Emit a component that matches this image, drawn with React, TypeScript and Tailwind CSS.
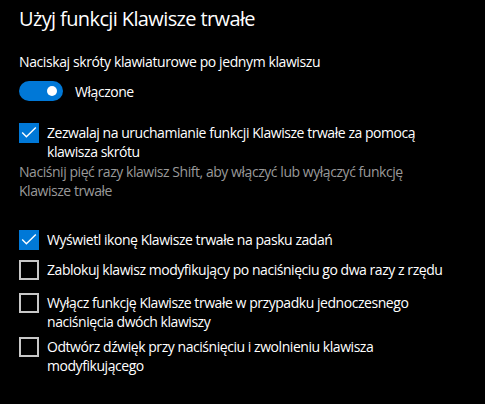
import React from "react";

function Check() {
  return (
    <div className="w-[20px] h-[20px] shrink-0 bg-[#0078d7] flex items-center justify-center">
      <svg width="20" height="20" viewBox="0 0 20 20" fill="none">
        <polyline points="3.2,9.6 7.4,13.8 16.8,4.6" stroke="#ffffff" strokeWidth="1.4" fill="none" />
      </svg>
    </div>
  );
}

function Empty() {
  return <div className="w-[20px] h-[20px] shrink-0 border-2 border-[#c8c8c8] box-border" />;
}

function Item({ checked, lines, className }: { checked: boolean; lines: string[]; className: string }) {
  return (
    <div className={"flex items-start " + className}>
      {checked ? <Check /> : <Empty />}
      <div className="ml-[8px] text-[14px] leading-[19px] tracking-[-0.45px] text-white">
        {lines.map((l, i) => (
          <div key={i} className="whitespace-nowrap">{l}</div>
        ))}
      </div>
    </div>
  );
}

export default function App() {
  return (
    <div
      className="w-[485px] h-[404px] bg-black text-white pl-[19px] overflow-hidden"
      style={{ fontFamily: '"Open Sans", "Noto Sans", sans-serif' }}
    >
      <div className="pt-[5px] text-[20px] leading-[28px] tracking-[-0.62px] whitespace-nowrap">Użyj funkcji Klawisze trwałe</div>
      <div className="mt-[19px] text-[14px] leading-[19px] tracking-[-0.4px] whitespace-nowrap">Naciskaj skróty klawiaturowe po jednym klawiszu</div>
      <div className="mt-[10px] flex items-center">
        <div className="w-[44px] h-[20px] rounded-full bg-[#0078d7] flex items-center justify-end pr-[6px]">
          <div className="w-[10px] h-[10px] rounded-full bg-white" />
        </div>
        <span className="ml-[12px] text-[14px] leading-[19px] tracking-[-0.45px]">Włączone</span>
      </div>
      <Item
        className="mt-[22px]"
        checked
        lines={["Zezwalaj na uruchamianie funkcji Klawisze trwałe za pomocą", "klawisza skrótu"]}
      />
      <div className="mt-[1px] text-[14px] leading-[19px] tracking-[-0.45px] text-[#999999]">
        <div className="whitespace-nowrap">Naciśnij pięć razy klawisz Shift, aby włączyć lub wyłączyć funkcję</div>
        <div className="whitespace-nowrap">Klawisze trwałe</div>
      </div>
      <Item className="mt-[30px]" checked lines={["Wyświetl ikonę Klawisze trwałe na pasku zadań"]} />
      <Item className="mt-[10px]" checked={false} lines={["Zablokuj klawisz modyfikujący po naciśnięciu go dwa razy z rzędu"]} />
      <Item
        className="mt-[13px]"
        checked={false}
        lines={["Wyłącz funkcję Klawisze trwałe w przypadku jednoczesnego", "naciśnięcia dwóch klawiszy"]}
      />
      <Item
        className="mt-[6px]"
        checked={false}
        lines={["Odtwórz dźwięk przy naciśnięciu i zwolnieniu klawisza", "modyfikującego"]}
      />
    </div>
  );
}
